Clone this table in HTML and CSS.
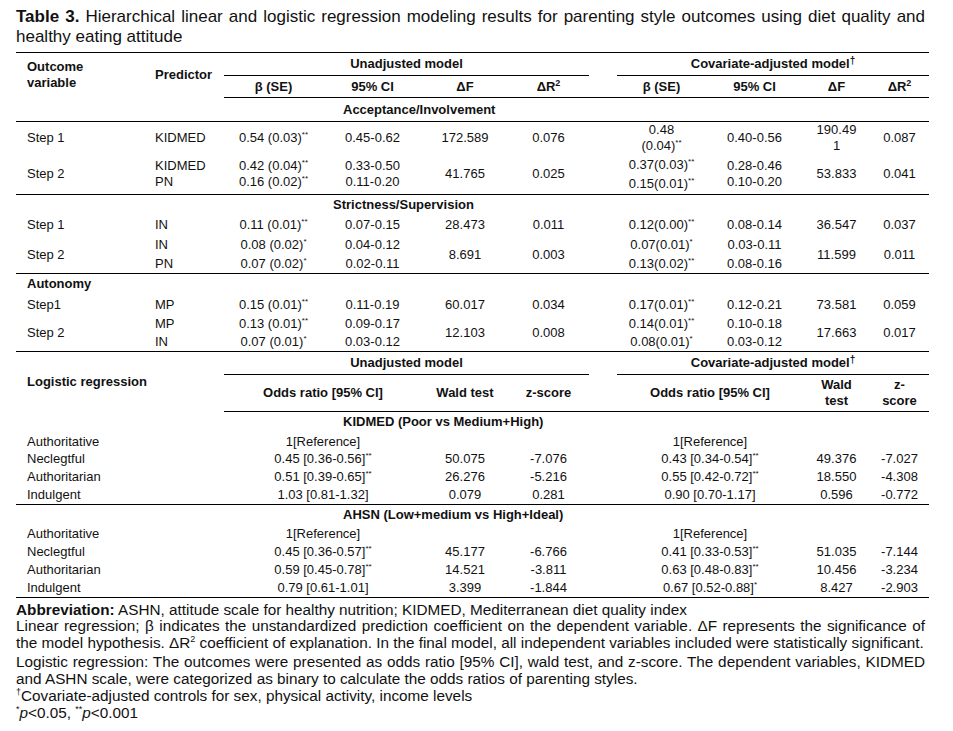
FILE: index.html
```html
<!DOCTYPE html>
<html lang="en">
<head>
    <meta charset="UTF-8">
    <title>Table 3</title>
    <link rel="stylesheet" href="styles.css">
</head>
<body>

<div class="page">
    <p class="caption"><b>Table 3.</b> Hierarchical linear and logistic regression modeling results for parenting style outcomes using diet quality and healthy eating attitude</p>

    <table class="results">
        <colgroup>
            <col style="width:128px"><col style="width:80px">
            <col style="width:99px"><col style="width:99px"><col style="width:86px"><col style="width:81px">
            <col style="width:28px">
            <col style="width:89px"><col style="width:97px"><col style="width:67px"><col style="width:59px">
        </colgroup>

        <!-- linear regression header -->
        <tr class="h-a">
            <th rowspan="2" class="left">Outcome<br>variable</th>
            <th rowspan="2" class="left">Predictor</th>
            <th colspan="4" class="rule">Unadjusted model</th>
            <th></th>
            <th colspan="4" class="rule">Covariate-adjusted model<sup class="dag">†</sup></th>
        </tr>
        <tr class="h-b">
            <th class="rule">β (SE)</th>
            <th class="rule">95% CI</th>
            <th class="rule">ΔF</th>
            <th class="rule">ΔR<sup class="sq">2</sup></th>
            <th class="rule"></th>
            <th class="rule">β (SE)</th>
            <th class="rule">95% CI</th>
            <th class="rule">ΔF</th>
            <th class="rule">ΔR<sup class="sq">2</sup></th>
        </tr>

        <tr class="group r-24 end">
            <td colspan="3"></td>
            <th colspan="8" class="group-title">Acceptance/Involvement</th>
        </tr>
        <tr class="r-30">
            <td class="left">Step 1</td>
            <td class="left">KIDMED</td>
            <td>0.54 (0.03)<sup>**</sup></td>
            <td>0.45-0.62</td>
            <td>172.589</td>
            <td>0.076</td>
            <td></td>
            <td>0.48<br>(0.04)<sup>**</sup></td>
            <td>0.40-0.56</td>
            <td>190.49<br>1</td>
            <td>0.087</td>
        </tr>
        <tr class="r-40 end">
            <td class="left">Step 2</td>
            <td class="left">KIDMED<br>PN</td>
            <td>0.42 (0.04)<sup>**</sup><br>0.16 (0.02)<sup>**</sup></td>
            <td>0.33-0.50<br>0.11-0.20</td>
            <td>41.765</td>
            <td>0.025</td>
            <td></td>
            <td class="loose">0.37(0.03)<sup>**</sup><br>0.15(0.01)<sup>**</sup></td>
            <td>0.28-0.46<br>0.10-0.20</td>
            <td>53.833</td>
            <td>0.041</td>
        </tr>

        <tr class="group r-21">
            <td colspan="3"></td>
            <th colspan="8" class="group-title near">Strictness/Supervision</th>
        </tr>
        <tr class="r-20">
            <td class="left">Step 1</td>
            <td class="left">IN</td>
            <td>0.11 (0.01)<sup>**</sup></td>
            <td>0.07-0.15</td>
            <td>28.473</td>
            <td>0.011</td>
            <td></td>
            <td>0.12(0.00)<sup>**</sup></td>
            <td>0.08-0.14</td>
            <td>36.547</td>
            <td>0.037</td>
        </tr>
        <tr class="r-38 loose end">
            <td class="left">Step 2</td>
            <td class="left">IN<br>PN</td>
            <td>0.08 (0.02)<sup>*</sup><br>0.07 (0.02)<sup>*</sup></td>
            <td>0.04-0.12<br>0.02-0.11</td>
            <td>8.691</td>
            <td>0.003</td>
            <td></td>
            <td>0.07(0.01)<sup>*</sup><br>0.13(0.02)<sup>**</sup></td>
            <td>0.03-0.11<br>0.08-0.16</td>
            <td>11.599</td>
            <td>0.011</td>
        </tr>

        <tr class="r-21">
            <th colspan="11" class="left">Autonomy</th>
        </tr>
        <tr class="r-20">
            <td class="left">Step1</td>
            <td class="left">MP</td>
            <td>0.15 (0.01)<sup>**</sup></td>
            <td>0.11-0.19</td>
            <td>60.017</td>
            <td>0.034</td>
            <td></td>
            <td>0.17(0.01)<sup>**</sup></td>
            <td>0.12-0.21</td>
            <td>73.581</td>
            <td>0.059</td>
        </tr>
        <tr class="r-37 mid end">
            <td class="left">Step 2</td>
            <td class="left">MP<br>IN</td>
            <td>0.13 (0.01)<sup>**</sup><br>0.07 (0.01)<sup>*</sup></td>
            <td>0.09-0.17<br>0.03-0.12</td>
            <td>12.103</td>
            <td>0.008</td>
            <td></td>
            <td>0.14(0.01)<sup>**</sup><br>0.08(0.01)<sup>*</sup></td>
            <td>0.10-0.18<br>0.03-0.12</td>
            <td>17.663</td>
            <td>0.017</td>
        </tr>

        <!-- logistic regression header -->
        <tr class="h-a">
            <th rowspan="2" colspan="2" class="left">Logistic regression</th>
            <th colspan="4" class="rule">Unadjusted model</th>
            <th></th>
            <th colspan="4" class="rule">Covariate-adjusted model<sup class="dag">†</sup></th>
        </tr>
        <tr class="r-37 end">
            <th colspan="2">Odds ratio [95% CI]</th>
            <th>Wald test</th>
            <th>z-score</th>
            <th></th>
            <th colspan="2">Odds ratio [95% CI]</th>
            <th>Wald<br>test</th>
            <th>z-<br>score</th>
        </tr>

        <tr class="group r-21">
            <td colspan="3"></td>
            <th colspan="8" class="group-title">KIDMED (Poor vs Medium+High)</th>
        </tr>
        <tr class="r-18">
            <td colspan="2" class="left">Authoritative</td>
            <td colspan="2">1[Reference]</td>
            <td></td><td></td><td></td>
            <td colspan="2">1[Reference]</td>
            <td></td><td></td>
        </tr>
        <tr class="r-17">
            <td colspan="2" class="left">Neclegtful</td>
            <td colspan="2">0.45 [0.36-0.56]<sup>**</sup></td>
            <td>50.075</td>
            <td>-7.076</td>
            <td></td>
            <td colspan="2">0.43 [0.34-0.54]<sup>**</sup></td>
            <td>49.376</td>
            <td>-7.027</td>
        </tr>
        <tr class="r-18">
            <td colspan="2" class="left">Authoritarian</td>
            <td colspan="2">0.51 [0.39-0.65]<sup>**</sup></td>
            <td>26.276</td>
            <td>-5.216</td>
            <td></td>
            <td colspan="2">0.55 [0.42-0.72]<sup>**</sup></td>
            <td>18.550</td>
            <td>-4.308</td>
        </tr>
        <tr class="r-19 end">
            <td colspan="2" class="left">Indulgent</td>
            <td colspan="2">1.03 [0.81-1.32]</td>
            <td>0.079</td>
            <td>0.281</td>
            <td></td>
            <td colspan="2">0.90 [0.70-1.17]</td>
            <td>0.596</td>
            <td>-0.772</td>
        </tr>

        <tr class="group r-20">
            <td colspan="3"></td>
            <th colspan="8" class="group-title">AHSN (Low+medium vs High+Ideal)</th>
        </tr>
        <tr class="r-18">
            <td colspan="2" class="left">Authoritative</td>
            <td colspan="2">1[Reference]</td>
            <td></td><td></td><td></td>
            <td colspan="2">1[Reference]</td>
            <td></td><td></td>
        </tr>
        <tr class="r-18">
            <td colspan="2" class="left">Neclegtful</td>
            <td colspan="2">0.45 [0.36-0.57]<sup>**</sup></td>
            <td>45.177</td>
            <td>-6.766</td>
            <td></td>
            <td colspan="2">0.41 [0.33-0.53]<sup>**</sup></td>
            <td>51.035</td>
            <td>-7.144</td>
        </tr>
        <tr class="r-18">
            <td colspan="2" class="left">Authoritarian</td>
            <td colspan="2">0.59 [0.45-0.78]<sup>**</sup></td>
            <td>14.521</td>
            <td>-3.811</td>
            <td></td>
            <td colspan="2">0.63 [0.48-0.83]<sup>**</sup></td>
            <td>10.456</td>
            <td>-3.234</td>
        </tr>
        <tr class="r-19 end">
            <td colspan="2" class="left">Indulgent</td>
            <td colspan="2">0.79 [0.61-1.01]</td>
            <td>3.399</td>
            <td>-1.844</td>
            <td></td>
            <td colspan="2">0.67 [0.52-0.88]<sup>*</sup></td>
            <td>8.427</td>
            <td>-2.903</td>
        </tr>
    </table>

    <div class="notes">
        <p><b>Abbreviation:</b> ASHN, attitude scale for healthy nutrition; KIDMED, Mediterranean diet quality index</p>
        <p class="tight">Linear regression; β indicates the unstandardized prediction coefficient on the dependent variable. ΔF represents the significance of the model hypothesis. ΔR<sup>2</sup> coefficient of explanation. In the final model, all independent variables included were statistically significant.</p>
        <p class="gap">Logistic regression: The outcomes were presented as odds ratio [95% CI], wald test, and z-score. The dependent variables, KIDMED and ASHN scale, were categorized as binary to calculate the odds ratios of parenting styles.</p>
        <p><sup>†</sup>Covariate-adjusted controls for sex, physical activity, income levels</p>
        <p><sup>*</sup><i>p</i>&lt;0.05, <sup>**</sup><i>p</i>&lt;0.001</p>
    </div>
</div>

</body>
</html>
```

FILE: styles.css
```css
body {
    margin: 0;
    background-color: #fff;
    color: #111;
    font-family: "Liberation Sans", Arial, sans-serif;
}

.page {
    width: 913px;
    padding: 7px 0 0 16px;
}

/* caption */
.caption {
    margin: 0 4px 5px 0;
    font-size: 17px;
    line-height: 20px;
    text-align: justify;
}

/* table */
.results {
    width: 913px;
    table-layout: fixed;
    border-collapse: collapse;
    border-top: 1px solid #000;
    font-size: 13px;
    line-height: 16px;
}
.results th,
.results td {
    padding: 0;
    text-align: center;
    vertical-align: middle;
    font-weight: normal;
    white-space: nowrap;
}
.results th {
    font-weight: bold;
}
.results .left {
    text-align: left;
    padding-left: 11px;
}
.results .rule {
    border-bottom: 1px solid #000;
}
.results tr.end > * {
    border-bottom: 1px solid #000;
}
.results .group-title {
    text-align: left;
    padding-left: 20px;
}
.results .group-title.near {
    padding-left: 10px;
}
.results .loose,
.results tr.loose td {
    line-height: 19px;
}
.results tr.mid td {
    line-height: 18px;
}

/* row heights */
.h-a { height: 23px; }
.h-b { height: 22px; }
.r-17 { height: 17px; }
.r-18 { height: 18px; }
.r-19 { height: 19px; }
.r-20 { height: 20px; }
.r-21 { height: 21px; }
.r-24 { height: 24px; }
.r-30 { height: 30px; }
.r-37 { height: 37px; }
.r-38 { height: 38px; }
.r-40 { height: 40px; }

/* significance marks */
.results sup {
    font-size: 8px;
    line-height: 0;
    vertical-align: 5px;
}
.results sup.dag {
    font-size: 10px;
    vertical-align: 4px;
}
.results sup.sq {
    font-size: 9px;
    vertical-align: 5px;
}

/* footnotes */
.notes {
    margin: 3px 4px 0 0;
    font-size: 15.3px;
    line-height: 17px;
    text-align: justify;
}
.notes p {
    margin: 0;
}
.notes p.tight {
    margin-top: -1px;
}
.notes p.gap {
    margin-top: 2px;
}
.notes sup {
    font-size: 9px;
    line-height: 0;
    vertical-align: 6px;
}
```
